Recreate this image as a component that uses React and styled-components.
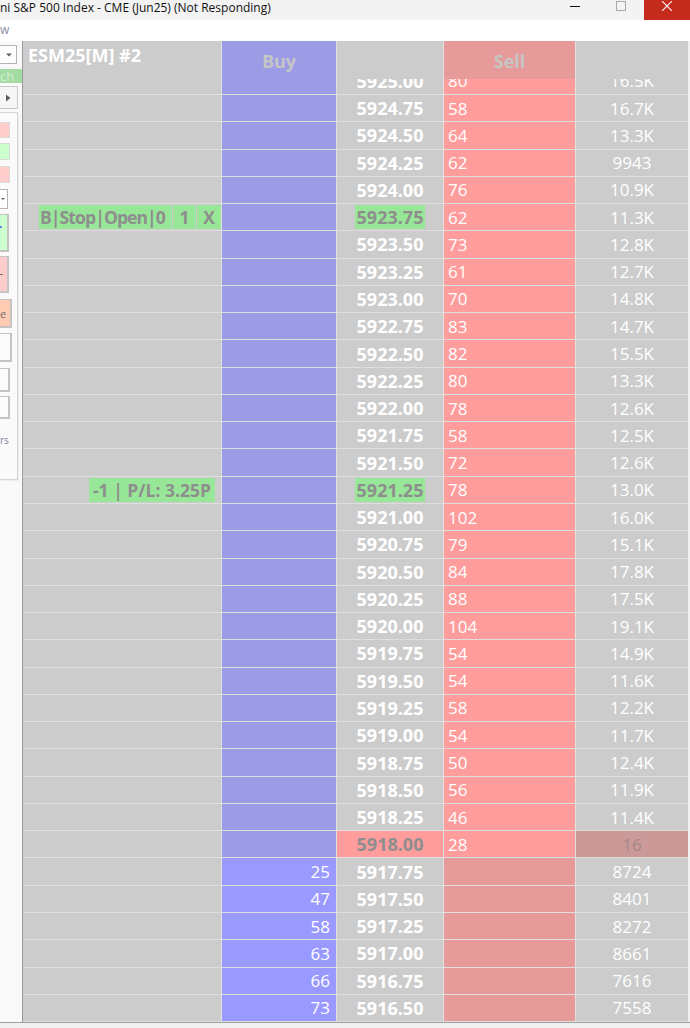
import React from 'react'
import styled, { createGlobalStyle } from 'styled-components'

const GlobalStyle = createGlobalStyle`
  html, body {
    margin: 0;
    padding: 0;
    background: #f0f0f0;
  }
  body {
    font-family: "Open Sans", "Liberation Sans", sans-serif;
  }
`

const COLS = '198px 115px 107px 132px 113px'
const ROW_H = 27.27

const Window = styled.div`
  width: 690px;
  height: 1028px;
  overflow: hidden;
  display: flex;
  flex-direction: column;
  background: #f0f0f0;
`

const TitleBar = styled.div`
  height: 20px;
  flex-shrink: 0;
  background: #f3f3f3;
  display: flex;
  align-items: flex-start;
`

const Title = styled.div`
  flex: 1;
  font-size: 12px;
  line-height: 16px;
  color: #111;
  white-space: nowrap;
`

const Control = styled.div`
  width: 46px;
  height: 20px;
  display: flex;
  justify-content: center;
  align-items: flex-start;
  padding-top: 1px;
  box-sizing: border-box;
  background: ${p => (p.$close ? '#c42b1c' : 'transparent')};
`

const MenuBar = styled.div`
  height: 21px;
  flex-shrink: 0;
  background: #ffffff;
  font-size: 12px;
  line-height: 19px;
  color: #8c8ca6;
  padding-left: 0;
`

const Main = styled.div`
  height: 981px;
  flex-shrink: 0;
  display: flex;
  border-bottom: 1px solid #a0a0a0;
`

const Sidebar = styled.div`
  width: 22px;
  flex-shrink: 0;
  background: #f9f9f9;
  border-right: 1px solid #9c9c9c;
  display: flex;
  flex-direction: column;
  overflow: hidden;
`

const Combo = styled.div`
  margin-top: ${p => p.$mt}px;
  width: ${p => p.$w}px;
  height: ${p => p.$h}px;
  flex-shrink: 0;
  box-sizing: border-box;
  background: #fdfdfd;
  border: 1px solid #b4b4b4;
  border-left: none;
  display: flex;
  align-items: center;
  justify-content: flex-end;
  padding-right: ${p => p.$pr}px;
`

const SearchStrip = styled.div`
  margin-top: 5px;
  height: 14px;
  flex-shrink: 0;
  background: #a2dca2;
  color: #d4ecd4;
  font-size: 13px;
  line-height: 14px;
  padding-left: 0;
  white-space: nowrap;
  overflow: hidden;
`

const ArrowBtn = styled.div`
  margin-top: 3px;
  width: 18px;
  height: 23px;
  flex-shrink: 0;
  box-sizing: border-box;
  background: #f6f6f6;
  border: 1px solid #c8c8c8;
  border-left: none;
  display: flex;
  align-items: center;
  justify-content: flex-end;
  padding-right: 5px;
`

const Panel = styled.div`
  margin-top: 3px;
  width: 18px;
  height: 368px;
  flex-shrink: 0;
  box-sizing: border-box;
  border: 1px solid #d6d6d6;
  border-left: none;
  box-shadow: 1px 1px 0 #ececec;
  background: #fafafa;
  display: flex;
  flex-direction: column;
`

const toneBg = {
  pink: '#ffcccc',
  green: '#ccffcc',
  orange: '#ffcbb3',
  white: '#fbfbfb',
}

const Swatch = styled.div`
  margin-top: ${p => p.$mt}px;
  width: ${p => p.$w}px;
  height: ${p => p.$h}px;
  flex-shrink: 0;
  box-sizing: border-box;
  background: ${p => toneBg[p.$tone]};
  border: 1px solid #dadada;
  border-left: none;
`

const ActionBtn = styled.div`
  margin-top: ${p => p.$mt}px;
  width: ${p => p.$w}px;
  height: ${p => p.$h}px;
  flex-shrink: 0;
  box-sizing: border-box;
  background: ${p => toneBg[p.$tone]};
  border: 1px solid #c4c4c4;
  border-left: none;
  border-right-width: 2px;
  border-bottom-width: 2px;
  display: flex;
  align-items: center;
  font-size: 11px;
  color: #707070;
  overflow: hidden;
`

const Glyph = styled.span`
  line-height: 1;
`

const Dot = styled.span`
  width: 2px;
  height: 2px;
  background: #5a8ad8;
  margin-top: -12px;
`

const Dash = styled.span`
  width: 3px;
  height: 1px;
  background: #707070;
`

const PanelText = styled.div`
  margin-top: 15px;
  font-size: 10px;
  line-height: 12px;
  color: #8282a4;
  padding-left: 0;
  white-space: nowrap;
`

const Ladder = styled.div`
  width: 665px;
  flex-shrink: 0;
  display: flex;
  flex-direction: column;
  overflow: hidden;
  background: #cccccc;
`

const Header = styled.div`
  display: grid;
  grid-template-columns: ${COLS};
  height: 38px;
  flex-shrink: 0;
`

const headBg = {
  label: '#cccccc',
  buy: '#9b9be6',
  plain: '#cccccc',
  sell: '#e69a9a',
}

const HeadCell = styled.div`
  background: ${p => headBg[p.$tone]};
  border-left: ${p => (p.$tone === 'label' ? 'none' : '1px solid #e0e0e0')};
  display: flex;
  align-items: center;
  justify-content: center;
  padding-top: 2px;
  box-sizing: border-box;
  font-weight: 700;
  font-size: 18px;
  color: #c6c6c6;
`

const Symbol = styled.div`
  align-self: flex-start;
  margin-right: auto;
  padding: 1px 0 0 5px;
  font-weight: 700;
  font-size: 18px;
  line-height: 22px;
  color: #ffffff;
`

const Body = styled.div`
  flex: 1;
  display: flex;
  flex-direction: column;
  overflow: hidden;
`

const Clip = styled.div`
  height: 16px;
  flex-shrink: 0;
  overflow: hidden;
  display: flex;
  flex-direction: column;
  justify-content: flex-end;
`

const Row = styled.div`
  display: grid;
  grid-template-columns: ${COLS};
  height: ${ROW_H}px;
  flex-shrink: 0;
  box-sizing: border-box;
  border-bottom: 1px solid #dedede;
`

const Cell = styled.div`
  border-left: 1px solid #e0e0e0;
  display: flex;
  align-items: center;
  font-size: 17px;
  color: #ffffff;
  white-space: nowrap;
  overflow: hidden;
`

const LabelCell = styled(Cell)`
  border-left: none;
  background: #cccccc;
  justify-content: flex-end;
  align-items: stretch;
  padding: 1px ${p => p.$pr || 0}px 1px 0;
`

const BuyCell = styled(Cell)`
  background: ${p => (p.$filled ? '#9999ff' : '#9b9be6')};
  justify-content: flex-end;
  padding-right: 6px;
`

const PriceCell = styled(Cell)`
  background: ${p => (p.$current ? '#ff9c9c' : '#cccccc')};
  justify-content: center;
  align-items: stretch;
  padding: 1px 0;
`

const PriceText = styled.span`
  display: flex;
  align-items: center;
  padding: 0 2px;
  font-weight: 700;
  font-size: 18px;
  background: ${p => (p.$hl ? '#98e698' : 'transparent')};
  color: ${p => (p.$hl || p.$current ? '#8e8e8e' : '#ffffff')};
`

const SellCell = styled(Cell)`
  background: ${p => (p.$filled ? '#ff9c9c' : '#e69a9a')};
  padding-left: 4px;
`

const VolCell = styled(Cell)`
  background: ${p => (p.$current ? '#cc9999' : '#cccccc')};
  color: ${p => (p.$current ? '#a08888' : '#ffffff')};
  justify-content: center;
`

const Tag = styled.span`
  display: flex;
  align-items: center;
  background: #98e698;
  color: #8e8e8e;
  font-weight: 700;
  font-size: 17.5px;
  letter-spacing: ${p => p.$ls || 0}px;
  padding: 0 ${p => p.$px}px;
  margin-left: 1px;
  justify-content: ${p => p.$align || 'center'};
  width: ${p => (p.$w ? `${p.$w}px` : 'auto')};
  box-sizing: border-box;
  overflow: hidden;
`

const asks = [
  ['5924.75', '58', '16.7K'],
  ['5924.50', '64', '13.3K'],
  ['5924.25', '62', '9943'],
  ['5924.00', '76', '10.9K'],
  ['5923.75', '62', '11.3K'],
  ['5923.50', '73', '12.8K'],
  ['5923.25', '61', '12.7K'],
  ['5923.00', '70', '14.8K'],
  ['5922.75', '83', '14.7K'],
  ['5922.50', '82', '15.5K'],
  ['5922.25', '80', '13.3K'],
  ['5922.00', '78', '12.6K'],
  ['5921.75', '58', '12.5K'],
  ['5921.50', '72', '12.6K'],
  ['5921.25', '78', '13.0K'],
  ['5921.00', '102', '16.0K'],
  ['5920.75', '79', '15.1K'],
  ['5920.50', '84', '17.8K'],
  ['5920.25', '88', '17.5K'],
  ['5920.00', '104', '19.1K'],
  ['5919.75', '54', '14.9K'],
  ['5919.50', '54', '11.6K'],
  ['5919.25', '58', '12.2K'],
  ['5919.00', '54', '11.7K'],
  ['5918.75', '50', '12.4K'],
  ['5918.50', '56', '11.9K'],
  ['5918.25', '46', '11.4K'],
]

const bids = [
  ['5917.75', '25', '8724'],
  ['5917.50', '47', '8401'],
  ['5917.25', '58', '8272'],
  ['5917.00', '63', '8661'],
  ['5916.75', '66', '7616'],
  ['5916.50', '73', '7558'],
]

const working = '5923.75'
const position = '5921.25'

function Label({ price }) {
  if (price === working) {
    return (
      <LabelCell>
        <Tag $w={133} $px={1} $ls={-0.9} $align="flex-start">B|Stop|Open|0</Tag>
        <Tag $w={23} $px={0}>1</Tag>
        <Tag $w={24} $px={0}>X</Tag>
      </LabelCell>
    )
  }
  if (price === position) {
    return (
      <LabelCell $pr={6}>
        <Tag $px={4}>-1 | P/L: 3.25P</Tag>
      </LabelCell>
    )
  }
  return <LabelCell />
}

function LadderRow({ price, buy, sell, vol, current }) {
  const hl = price === working || price === position
  return (
    <Row>
      <Label price={price} />
      <BuyCell $filled={!!buy}>{buy}</BuyCell>
      <PriceCell $current={current}>
        <PriceText $hl={hl} $current={current}>{price}</PriceText>
      </PriceCell>
      <SellCell $filled={!!sell}>{sell}</SellCell>
      <VolCell $current={current}>{vol}</VolCell>
    </Row>
  )
}

const Tri = ({ dir }) => (
  <svg width="8" height="8" viewBox="0 0 8 8">
    {dir === 'down'
      ? <polygon points="1,2.5 7,2.5 4,5.5" fill="#606060" />
      : <polygon points="2,0.5 6.5,4 2,7.5" fill="#5c5c5c" />}
  </svg>
)

export default function App() {
  return (
    <Window>
      <GlobalStyle />
      <TitleBar>
        <Title>ni S&amp;P 500 Index - CME (Jun25) (Not Responding)</Title>
        <Control>
          <svg width="10" height="10" viewBox="0 0 10 10">
            <line x1="0" y1="5.5" x2="10" y2="5.5" stroke="#111" strokeWidth="1" />
          </svg>
        </Control>
        <Control>
          <svg width="10" height="10" viewBox="0 0 10 10">
            <rect x="0.5" y="0.5" width="9" height="9" fill="none" stroke="#a8a8a8" strokeWidth="1" />
          </svg>
        </Control>
        <Control $close>
          <svg width="10" height="10" viewBox="0 0 10 10">
            <line x1="0" y1="0" x2="10" y2="10" stroke="#fff" strokeWidth="1.1" />
            <line x1="10" y1="0" x2="0" y2="10" stroke="#fff" strokeWidth="1.1" />
          </svg>
        </Control>
      </TitleBar>
      <MenuBar>w</MenuBar>
      <Main>
        <Sidebar>
          <Combo $mt={4} $w={17} $h={19} $pr={3}><Tri dir="down" /></Combo>
          <SearchStrip>ch</SearchStrip>
          <ArrowBtn><Tri dir="right" /></ArrowBtn>
          <Panel>
            <Swatch $mt={9} $w={10} $h={16} $tone="pink" />
            <Swatch $mt={5} $w={10} $h={17} $tone="green" />
            <Swatch $mt={6} $w={10} $h={17} $tone="pink" />
            <Combo $mt={6} $w={8} $h={20} $pr={0}>
              <svg width="6" height="8" viewBox="0 0 6 8"><polygon points="0,3 4,3 2,5" fill="#606060" /></svg>
            </Combo>
            <ActionBtn $mt={5} $w={9} $h={38} $tone="green"><Dot /></ActionBtn>
            <ActionBtn $mt={4} $w={9} $h={37} $tone="pink"><Dash /></ActionBtn>
            <ActionBtn $mt={6} $w={12} $h={29} $tone="orange"><Glyph>e</Glyph></ActionBtn>
            <ActionBtn $mt={5} $w={12} $h={29} $tone="white" />
            <ActionBtn $mt={6} $w={10} $h={24} $tone="white" />
            <ActionBtn $mt={4} $w={10} $h={23} $tone="white" />
            <PanelText>rs</PanelText>
          </Panel>
        </Sidebar>
        <Ladder>
          <Header>
            <HeadCell $tone="label"><Symbol>ESM25[M] #2</Symbol></HeadCell>
            <HeadCell $tone="buy">Buy</HeadCell>
            <HeadCell $tone="plain" />
            <HeadCell $tone="sell">Sell</HeadCell>
            <HeadCell $tone="plain" />
          </Header>
          <Body>
            <Clip>
              <LadderRow price="5925.00" sell="80" vol="16.5K" />
            </Clip>
            {asks.map(([p, s, v]) => (
              <LadderRow key={p} price={p} sell={s} vol={v} />
            ))}
            <LadderRow price="5918.00" sell="28" vol="16" current />
            {bids.map(([p, b, v]) => (
              <LadderRow key={p} price={p} buy={b} vol={v} />
            ))}
          </Body>
        </Ladder>
      </Main>
    </Window>
  )
}
